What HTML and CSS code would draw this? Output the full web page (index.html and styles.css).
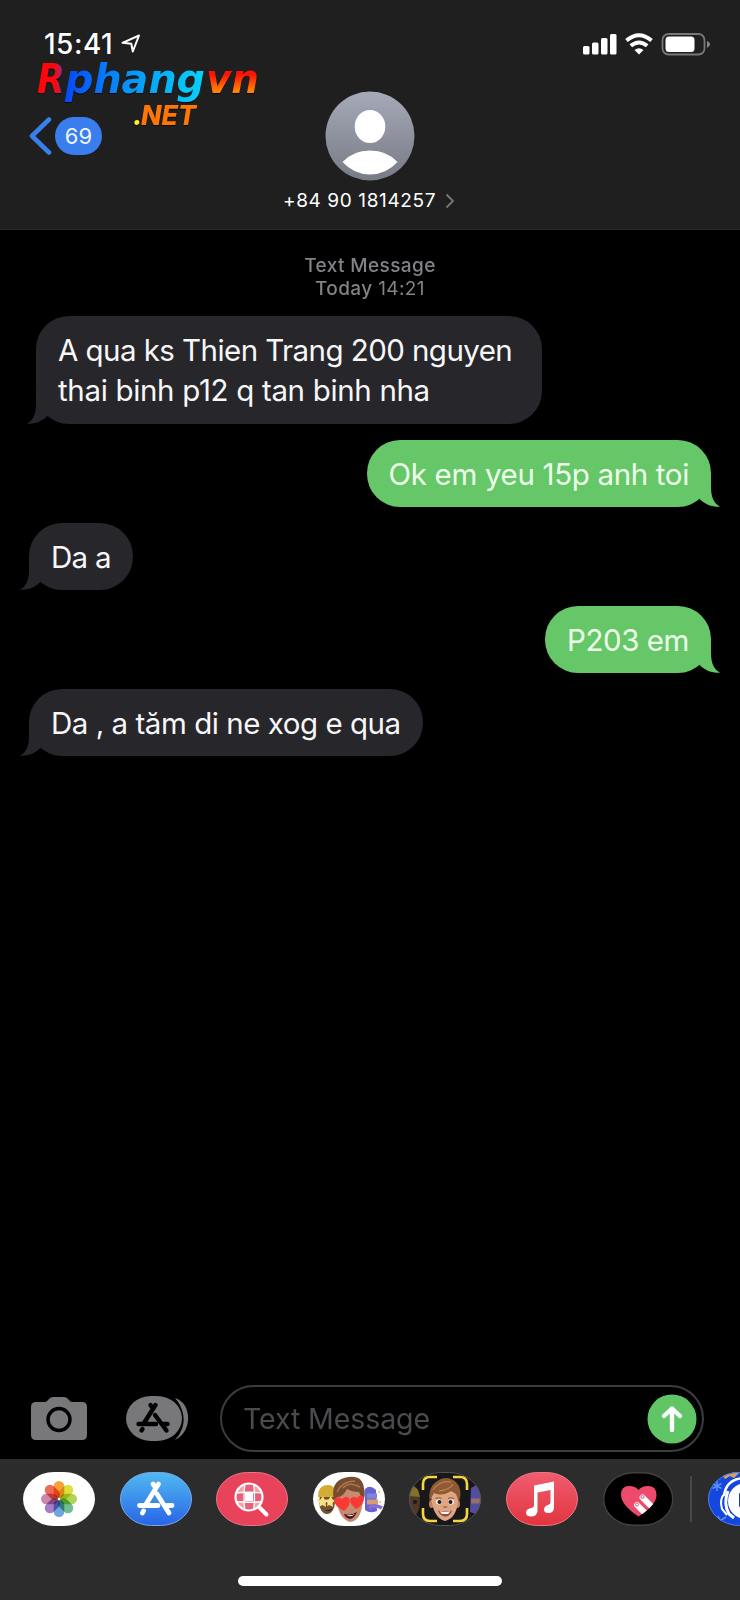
FILE: index.html
```html
<!DOCTYPE html>
<html lang="vi">
<head>
<meta charset="utf-8">
<title>Messages</title>
<link rel="stylesheet" href="styles.css">
</head>
<body>
<div class="phone">
  <header class="header">
    <div class="status">
      <span class="time">15:41</span>
      <svg class="locate" width="20" height="20" viewBox="0 0 20 20"><path d="M1.500 8.800 18 1.500 11.800 17.500 10.300 9.700Z" fill="none" stroke="#fff" stroke-width="2" stroke-linejoin="round"/></svg>
      <svg class="indicators" width="128" height="24" viewBox="0 0 128 24">
        <g fill="#fff"><rect x="0" y="13" width="6.500" height="8.500" rx="1.500"/><rect x="9" y="9.500" width="6.500" height="12" rx="1.500"/><rect x="18" y="5" width="6.500" height="16.500" rx="1.500"/><rect x="27" y="1" width="6.500" height="20.500" rx="1.500"/>
        <path d="M56 21.500 51.500 17Q56 13.400 60.500 17Z"/></g>
        <g fill="none" stroke="#fff" stroke-width="4"><path d="M43.500 7.500Q56-3 68.500 7.500"/><path d="M47.800 12.800Q56 6.200 64.200 12.800"/></g>
        <rect x="79.500" y="1" width="42" height="20.500" rx="6" fill="none" stroke="#777" stroke-width="1.800"/>
        <rect x="82.500" y="3.500" width="29" height="15.500" rx="3.500" fill="#fff"/><path d="M124 8Q127 9 127 11.200T124 15Z" fill="#858585"/>
      </svg>
    </div>
    <div class="back">
      <svg width="23" height="38" viewBox="0 0 23 38"><path d="M20 2.500 3 19 20 35.500" fill="none" stroke="#397eec" stroke-width="4.600" stroke-linecap="round" stroke-linejoin="round"/></svg>
      <span class="count">69</span>
    </div>
    <svg class="watermark" width="230" height="72" viewBox="0 0 230 72">
      <defs>
        <linearGradient id="r"><stop offset=".65" stop-color="#fa080c"/><stop offset="1" stop-color="#653bb0"/></linearGradient>
        <linearGradient id="p"><stop offset="0" stop-color="#0648f5"/><stop offset=".45" stop-color="#0794f8"/><stop offset="1" stop-color="#07d2fa"/></linearGradient>
        <linearGradient id="v" x2="0" y2="1"><stop offset=".4" stop-color="#fb1208"/><stop offset=".75" stop-color="#ff8200"/></linearGradient>
      </defs>
      <g class="logo"><text x="2" y="32" textLength="28" lengthAdjust="spacingAndGlyphs" fill="url(#r)">R</text><text x="30" y="32" textLength="140" lengthAdjust="spacingAndGlyphs" fill="url(#p)">phang</text><text x="171" y="32" textLength="53" lengthAdjust="spacingAndGlyphs" fill="url(#v)">vn</text></g>
      <g class="logo-net"><text x="98" y="64" fill="#fff21b">.</text><text x="106" y="64" textLength="55" lengthAdjust="spacingAndGlyphs" fill="#ff7608">NET</text></g>
    </svg>
    <div class="contact">
      <svg width="90" height="90" viewBox="0 0 90 90"><defs><linearGradient id="a" x2="0" y2="1"><stop stop-color="#a6a9b8"/><stop offset="1" stop-color="#777b85"/></linearGradient></defs><circle cx="45" cy="45" r="44.500" fill="url(#a)"/><ellipse cx="45" cy="35.500" rx="15.300" ry="16.500" fill="#fff"/><path d="M17.500 71Q28 59.500 45 59.500T72.500 71Q61 83.500 45 83.500T17.500 71Z" fill="#fff"/></svg>
      <div class="number"><span>+84 90 1814257</span><svg width="10" height="16" viewBox="0 0 10 16"><path d="M1.500 1.500 8 8 1.500 14.500" fill="none" stroke="#78787c" stroke-width="1.800"/></svg></div>
    </div>
  </header>

  <main class="thread">
    <div class="stamp"><b class="kind">Text Message</b><div><b>Today</b> 14:21</div></div>
    <div class="bubble in first"><span class="m1">A qua ks Thien Trang 200 nguyen</span><br><span class="m2">thai binh p12 q tan binh nha</span><svg class="tail" width="24" height="34"><path d="M9 0V14C9 24 6 31 0 33.500 8 34.500 15.500 31 20.500 26L24 10Z"/></svg></div>
    <div class="bubble out"><span class="m3">Ok em yeu 15p anh toi</span><svg class="tail" width="24" height="34"><path d="M9 0V14C9 24 6 31 0 33.500 8 34.500 15.500 31 20.500 26L24 10Z"/></svg></div>
    <div class="bubble in"><span class="m4">Da a</span><svg class="tail" width="24" height="34"><path d="M9 0V14C9 24 6 31 0 33.500 8 34.500 15.500 31 20.500 26L24 10Z"/></svg></div>
    <div class="bubble out"><span class="m5">P203 em</span><svg class="tail" width="24" height="34"><path d="M9 0V14C9 24 6 31 0 33.500 8 34.500 15.500 31 20.500 26L24 10Z"/></svg></div>
    <div class="bubble in"><span class="m6">Da , a tăm di ne xog e qua</span><svg class="tail" width="24" height="34"><path d="M9 0V14C9 24 6 31 0 33.500 8 34.500 15.500 31 20.500 26L24 10Z"/></svg></div>
  </main>

  <div class="composer">
    <svg class="camera" width="56" height="43" viewBox="0 0 56 43"><path d="M5 5H14Q16 5 17 3 19 0 22 0H33Q36 0 38 3 39 5 41 5H51Q56 5 56 10V38Q56 43 51 43H5Q0 43 0 38V10Q0 5 5 5Z" fill="#78787a"/><circle cx="28" cy="22.500" r="11" fill="none" stroke="#000" stroke-width="3.400"/></svg>
    <svg class="apps" width="63" height="46" viewBox="0 0 63 46"><rect width="56" height="45" rx="25" ry="22.500" fill="#78787a"/><path d="M49 2C66 7 67 35 49 44 61 31 60 15 49 2Z" fill="#78787a"/><g fill="none" stroke="#000" stroke-width="4.400" stroke-linecap="round"><path d="M24.500 9 27 12.500M29.500 9 18 27M29 19 40.500 34.500M12.500 28H30M38 28H41.500M16.500 33 15.500 34.500"/></g></svg>
    <div class="field"><span>Text Message</span><svg width="50" height="50" viewBox="0 0 50 50"><circle cx="25" cy="25" r="24.500" fill="#60c564"/><path d="M25 36V14.500M17 22 25 14.500 33 22" fill="none" stroke="#fff" stroke-width="4.400" stroke-linecap="round" stroke-linejoin="round"/></svg></div>
  </div>

  <footer class="dock">
    <div class="strip">
      <svg class="app" viewBox="0 0 72 54"><rect width="72" height="54" rx="31" ry="27" fill="#fff"/><g class="petals"><rect x="30.700" y="9" width="10.600" height="17" rx="5.300" fill="#f7a13a"/><rect x="30.700" y="9" width="10.600" height="17" rx="5.300" fill="#dfdf3a" transform="rotate(45 36 27)"/><rect x="30.700" y="9" width="10.600" height="17" rx="5.300" fill="#b0d45a" transform="rotate(90 36 27)"/><rect x="30.700" y="9" width="10.600" height="17" rx="5.300" fill="#72bd8e" transform="rotate(135 36 27)"/><rect x="30.700" y="9" width="10.600" height="17" rx="5.300" fill="#70a5dd" transform="rotate(180 36 27)"/><rect x="30.700" y="9" width="10.600" height="17" rx="5.300" fill="#a680c4" transform="rotate(225 36 27)"/><rect x="30.700" y="9" width="10.600" height="17" rx="5.300" fill="#cc87aa" transform="rotate(270 36 27)"/><rect x="30.700" y="9" width="10.600" height="17" rx="5.300" fill="#ee6a59" transform="rotate(315 36 27)"/></g></svg>
      <svg class="app" viewBox="0 0 72 54"><defs><linearGradient id="s" x2="0" y2="1"><stop stop-color="#51b9ef"/><stop offset="1" stop-color="#2864e7"/></linearGradient></defs><rect x=".5" y=".5" width="71" height="53" rx="31" ry="26.500" fill="url(#s)" stroke="#76a8ed"/><g fill="none" stroke="#fff" stroke-width="4.800" stroke-linecap="round"><path d="M33 12 36 16M38.500 12 25.500 33M37 22 49 41M19.500 33.500H38M47 33.500H52M23.500 39 22.500 41"/></g></svg>
      <svg class="app" viewBox="0 0 72 54"><rect x=".5" y=".5" width="71" height="53" rx="31" ry="26.500" fill="#e9425b" stroke="#ed7588"/><defs><clipPath id="lens"><circle cx="33" cy="25" r="13.500"/></clipPath></defs><g clip-path="url(#lens)"><rect x="19" y="11" width="28" height="28" fill="#f4a0ad"/><path d="M28 11H38V21H47V29H38V39H28V29H19V21H28Z" fill="#e9607a"/><path d="M29 21H37V29H29Z" fill="#fff"/><path d="M19 21Q33 19.500 47 21M19 29.500Q33 31 47 29.500M29 11Q27 25 29 39M37.500 11Q39.500 25 37.500 39" fill="none" stroke="#fff" stroke-width="1.300"/></g><circle cx="33" cy="25" r="13.500" fill="none" stroke="#fff" stroke-width="2.200"/><path d="M43 35 50.500 42.500" stroke="#fff" stroke-width="4" stroke-linecap="round"/></svg>
      <svg class="app" viewBox="0 0 72 54"><defs><clipPath id="capsule"><rect width="72" height="54" rx="31" ry="27"/></clipPath></defs><g clip-path="url(#capsule)"><rect width="72" height="54" fill="#fff"/><ellipse cx="14" cy="30" rx="8" ry="12" fill="#745231"/><path d="M5 25Q5 13 15 13 23 13 23 25Z" fill="#d3ac34"/><path d="m10 24 1.500 3.500 4 .5-3 3 .5 4-3.500-2-3.500 2 .5-4-3-3 4-.5Zm8 0 1.500 3.500 3 .5-3 3 .5 4-3.500-2-2.500 1 .5-3-2-3 3-.5Z" fill="#f9e387"/><path d="M10 37Q15 40 20 36Q17 42 10 37Z" fill="#2b201c"/><path d="M52 17Q57 12 63 18L64 39Q57 42 52 38Z" fill="#6762cd"/><path d="M54 24H64" stroke="#7b87df" stroke-width="5"/><path d="M54 30H65" stroke="#d79c75" stroke-width="5"/><path d="M56 36Q62 32 69 36" stroke="#866ed8" stroke-width="3.500" fill="none"/><g fill="#f3bd35"><circle cx="66" cy="20" r="1"/><circle cx="67" cy="30" r="1"/></g><path d="M23 24Q25 12 37 12T50 26Q49 49 37 50 25 47 23 24Z" fill="#c78b70"/><path d="M21 29Q17 10 31 6 49 1 51 16 53 23 50 29L46 20Q39 20 34 17 29 26 24 25Z" fill="#764b2f"/><path d="M24 20Q29 9 42 9M30 16Q36 9 47 15" stroke="#a77952" stroke-width="1.500" fill="none"/><g fill="#fa3934"><path d="M31 39Q21 34 21 28 24 23 29 27 34 22 36.500 27 38 33 31 39Z"/><path d="M43 37Q36 31 37 27 41 23 43.500 26 49 21 51 26 51 33 43 37Z"/></g><path d="M31 42Q38 44 44 40Q41 47 37 47 32 46 31 42Z" fill="#4a1519"/><path d="M33 43Q38 44 42 42L40 43.500Q36 45 33 43Z" fill="#fff"/></g></svg>
      <svg class="app" viewBox="0 0 72 54"><g clip-path="url(#capsule)"><rect width="72" height="54" fill="#181719"/><ellipse cx="4" cy="30" rx="7" ry="14" fill="#4e3929"/><path d="M0 14Q9 12 11 25L0 24Z" fill="#84702d"/><circle cx="6" cy="30" r="2" fill="#1c1716"/><path d="M62 16Q70 10 74 17V44L61 40Z" fill="#514d9f"/><path d="M62 29H72" stroke="#9a6d6e" stroke-width="5"/><ellipse cx="22.500" cy="32" rx="2.500" ry="4" fill="#be8060"/><ellipse cx="48.500" cy="32" rx="2.500" ry="4" fill="#be8060"/><path d="M22 24Q24 15 36 15 49 15 49 28 48 46 36 49 24 46 22 24Z" fill="#dda582"/><path d="M20.500 29Q19 15 27 10 37 2 47 10 54 17 50 30L47 22Q44 20 42 19 33 25 25 21Z" fill="#8f5934"/><path d="M24 18Q31 8 42 10M30 19Q41 18 44 12" stroke="#ba8151" stroke-width="1.300" fill="none"/><g fill="#fff"><ellipse cx="30" cy="30" rx="3" ry="2.400"/><ellipse cx="42" cy="30" rx="3" ry="2.400"/></g><g fill="#2c1b17"><circle cx="30.500" cy="30" r="2.100"/><circle cx="41.500" cy="30" r="2.100"/></g><path d="M26.500 26.500Q29 25 32.500 26.500M39 26.500Q42 25 45 26.500M34.500 34.500Q36 36 38 34.500" fill="none" stroke="#8c5938" stroke-width="1.200"/><path d="M29 38.500Q36 40.500 43 38.500Q41 44.500 36 44.500 31 44 29 38.500Z" fill="#9a4a42"/><path d="M30.500 39.300Q36 40.800 41.500 39.300L39 42H33Z" fill="#fff"/></g><rect x=".5" y=".5" width="71" height="53" rx="31" ry="26.500" fill="none" stroke="#555557"/><path d="M14 18V12Q14 5 21 5H28M44 5H51Q58 5 58 12V18M58 36V42Q58 49 51 49H44M28 49H21Q14 49 14 42V36" fill="none" stroke="#f4d642" stroke-width="2.600"/></svg>
      <svg class="app" viewBox="0 0 72 54"><defs><linearGradient id="m" x2="0" y2="1"><stop stop-color="#f05d70"/><stop offset="1" stop-color="#e23440"/></linearGradient></defs><rect x=".5" y=".5" width="71" height="53" rx="31" ry="26.500" fill="url(#m)" stroke="#ee7984"/><path d="M28 13.500 48 9.500V35Q48 41 42.500 41 38 41 38 37.500 38 34 42 33 44.500 32.500 44.500 30V18L31.500 20.500V39Q31 44.500 25 44.500 20 44.500 20 40.500 20 37 25 36 28 35.500 28 33Z" fill="#fff"/></svg>
      <svg class="app" viewBox="0 0 72 54"><rect x=".7" y=".7" width="69" height="52.600" rx="30" ry="26.300" fill="#000" stroke="#414143" stroke-width="1.400"/><defs><clipPath id="heart"><path d="M35.500 44.500Q18 33 18 22.500 18 14 26 14 32.500 14 35.500 18 38.500 14 45 14 53.500 14 53.500 23 53.500 33 35.500 44.500Z"/></clipPath></defs><g clip-path="url(#heart)"><rect x="15" y="10" width="42" height="38" fill="#ed4a6c"/><g stroke="#fff" stroke-width="6" stroke-linecap="round"><path d="M34 33 46 45M39.500 25.500 55 41"/></g><g fill="none" stroke="#ed4a6c" stroke-width="1"><circle cx="34" cy="32.500" r="1.500"/><circle cx="39.500" cy="25" r="1.500"/></g></g></svg>
      <span class="divider"></span>
      <svg class="app last" viewBox="0 0 72 54"><g clip-path="url(#capsule)"><rect width="72" height="54" fill="#1547dc"/><path d="M12 0 17 7 22 4 26 6 32 0Z" fill="#d7a466"/><g fill="none" stroke="#5b91fb" stroke-width="1.500"><path d="M9 9V19M4.500 11.500 13.500 16.500M13.500 11.500 4.500 16.500M10 44 14 52M18 45 10 50"/></g><circle cx="38" cy="29" r="18" fill="#fff"/><path d="M38 6Q18 6 16 24" fill="none" stroke="#fff" stroke-width="2.500"/><path d="M17 21Q11 27 14 37L19 43" fill="none" stroke="#fff" stroke-width="2"/><path d="M20 19Q15 32 21 42L26 46" fill="none" stroke="#fff" stroke-width="3"/><rect x="31" y="21" width="5" height="14" rx="1" fill="#173fae"/></g><rect x=".5" y=".5" width="71" height="53" rx="31" ry="26.500" fill="none" stroke="#5279e0"/></svg>
    </div>
    <div class="home"></div>
  </footer>
</div>
</body>
</html>
```
FILE: styles.css
```css
* { box-sizing: border-box; }
body { margin: 0; background: #000; font-family: Inter, "Liberation Sans", sans-serif; color: #fff; }
svg { display: block; flex: none; }
.phone { width: 740px; height: 1600px; display: flex; flex-direction: column; overflow: hidden; }
.header { position: relative; height: 230px; flex: none; background: #1f1f1f; border-bottom: 1px solid #252525; }
.status { display: flex; height: 88px; padding: 33px 29px 0 44px; align-items: flex-start; }
.time { width: 77px; padding-top: 1px; font-size: 28px; font-weight: 500; line-height: 21px; white-space: nowrap; letter-spacing: .5px; }
.locate { margin-top: 1px; }
.indicators { margin-left: auto; }
.back { position: absolute; left: 29px; top: 117px; display: flex; gap: 3px; }
.count { width: 47px; height: 38px; border-radius: 20px; background: #397eec; display: grid; place-items: center; font-size: 22px; letter-spacing: .2px; padding-bottom: 1px; color: #eef5ff; }
.watermark { position: absolute; left: 35px; top: 61px; overflow: visible; }
.logo, .logo-net { font-family: "DejaVu Sans", sans-serif; font-weight: bold; font-style: italic; font-size: 40px; filter: drop-shadow(0 1px 0 #080808); }
.logo-net { font-family: Inter, sans-serif; font-weight: 800; font-size: 27px; }
.contact { display: flex; flex-direction: column; align-items: center; margin-top: 3px; }
.number { display: flex; align-items: center; gap: 9px; height: 24px; margin: 8px 0 0 -2px; font-size: 19px; letter-spacing: .62px; }
.number span { margin-top: -2px; }
.thread { flex: 1; display: flex; flex-direction: column; align-items: flex-start; gap: 16px; padding: 24px 29px 0; }
.stamp { align-self: center; height: 46px; text-align: center; font-size: 19px; line-height: 23px; color: #828287; letter-spacing: .38px; }
.stamp b { font-weight: 500; }
.bubble { position: relative; height: 67px; padding: 14px 22px; border-radius: 33px; font-size: 29.500px; line-height: 40px; white-space: nowrap; flex: none; }
.in { background: #27262b; color: #f7f7f8; }
.out { background: #66c768; color: #edffeb; align-self: flex-end; }
.first { height: 108px; width: 506px; margin-left: 7px; }
.m1 { letter-spacing: -.56px; }
.m2 { letter-spacing: -.33px; }
.m3 { letter-spacing: -.34px; }
.m4 { letter-spacing: -.7px; }
.m5 { letter-spacing: -.44px; }
.m6 { letter-spacing: -.47px; }
.tail { position: absolute; left: -9px; bottom: 0; fill: #27262b; }
.out .tail { left: auto; right: -9px; transform: scaleX(-1); fill: #66c768; }
.composer { height: 74px; flex: none; display: flex; padding: 0 36px 0 31px; align-items: flex-start; }
.camera { margin-top: 12px; }
.apps { margin: 11px 0 0 39px; }
.field { margin-left: auto; width: 484px; height: 67px; border: 2px solid #3c3c3f; border-radius: 34px; display: flex; justify-content: space-between; align-items: center; padding: 0 5px 0 21px; color: #4b4b4f; font-size: 28.500px; letter-spacing: -.1px; }
.dock { height: 141px; flex: none; background: #2c2c2c; padding-top: 13px; display: flex; flex-direction: column; align-items: center; justify-content: space-between; padding-bottom: 14px; }
.strip { width: 740px; display: flex; align-items: center; gap: 24.600px; padding-left: 23px; overflow: hidden; }
.app { width: 72px; height: 54px; }
.petals { isolation: isolate; }
.petals rect { mix-blend-mode: multiply; }
.divider { width: 2px; height: 46px; background: #48484a; flex: none; margin-left: -9px; }
.last { margin-left: -9px; }
.home { width: 264px; height: 10px; border-radius: 5px; background: #fff; }
```
